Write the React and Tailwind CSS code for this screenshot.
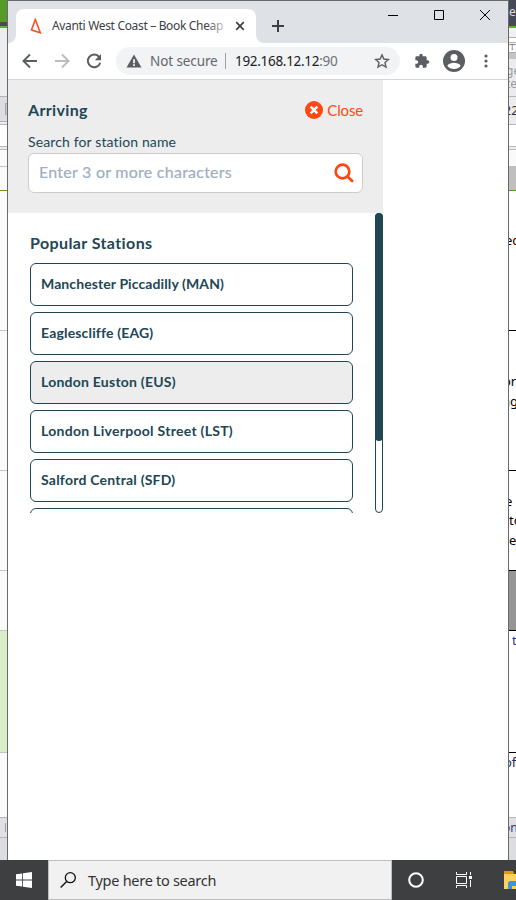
const leftStrip = [
  [22, 'bg-[#589a2a]'],
  [4, 'bg-[#474b57]'],
  [2, 'bg-[#5db22f]'],
  [68, 'bg-[#ecedef]'],
  [1, 'bg-[#b4b5ba]'],
  [24, 'bg-[#dcdde2]', 'box'],
  [1, 'bg-[#b4b5ba]'],
  [2, 'bg-[#ececee]'],
  [1, 'bg-[#b9b9b9]'],
  [21, 'bg-white'],
  [1, 'bg-[#b9b9b9]'],
  [2, 'bg-[#ececee]'],
  [1, 'bg-[#b9b9b9]'],
  [16, 'bg-[#fafafa]'],
  [1, 'bg-[#c6c6c6]'],
  [23, 'bg-[#fafafa]'],
  [1, 'bg-[#589a2a]'],
  [139, 'bg-[#fafafa]'],
  [1, 'bg-[#c4c4c4]'],
  [139, 'bg-[#fafafa]'],
  [1, 'bg-[#c4c4c4]'],
  [99, 'bg-[#fafafa]'],
  [1, 'bg-[#c4c4c4]'],
  [59, 'bg-[#fafafa]'],
  [1, 'bg-[#c4c4c4]'],
  [121, 'bg-[#d8edc8]'],
  [1, 'bg-[#c4c4c4]'],
  [64, 'bg-[#fafafa]'],
  [1, 'bg-[#b4b5ba]'],
  [19, 'bg-[#e0e1e5]', 'bar'],
  [1, 'bg-[#b4b5ba]'],
  [22, 'bg-[#dcdde2]'],
];

// [height, colour, [[text, top offset, left offset, text classes], ...]]
const rightStrip = [
  [26, 'bg-[#454a56]', [['e', 5, 0, 'text-[12px] text-[#d8dade]']]],
  [2, 'bg-[#5db22f]'],
  [9, 'bg-[#f1f1f3]'],
  [1, 'bg-[#b0b0b0]'],
  [4, 'bg-white'],
  [1, 'bg-[#b0b0b0]'],
  [1, 'bg-[#f1f1f3]'],
  [1, 'bg-[#b0b0b0]'],
  [7, 'bg-white', [['T', -1, 1, 'font-serif text-[8px] text-[#777]']]],
  [1, 'bg-[#b0b0b0]'],
  [6, 'bg-[#c4c4c6]'],
  [37, 'bg-[#ececee]', [['ge', 5, -3, 'text-[12px] text-[#9b9b9f]'], ['te', 18, -3, 'text-[12px] text-[#9b9b9f]']]],
  [1, 'bg-[#b4b5ba]'],
  [27, 'bg-[#ececee]', [['22', 7, -5, 'text-[12.5px] text-[#333]']]],
  [1, 'bg-[#b9b9b9]'],
  [21, 'bg-white'],
  [1, 'bg-[#b9b9b9]'],
  [2, 'bg-[#ececee]'],
  [1, 'bg-[#b9b9b9]'],
  [16, 'bg-[#fafafa]'],
  [24, 'bg-[#bfbfbf]'],
  [1, 'bg-[#589a2a]'],
  [139, 'bg-white', [['ec', 43, -4, 'text-[13px] text-black']]],
  [1, 'bg-black'],
  [139, 'bg-white', [['or', 44, -6, 'text-[13px] text-black'], ['ng', 64, -7, 'text-[13px] text-black']]],
  [1, 'bg-black'],
  [99, 'bg-white', [['e', 24, -4, 'text-[13px] text-black'], ['to', 43, 0, 'text-[13px] text-black'], ['e', 63, 0, 'text-[13px] text-black']]],
  [1, 'bg-black'],
  [59, 'bg-[#969696]'],
  [1, 'bg-black'],
  [121, 'bg-white', [['t', 3, 3, 'text-[13px] text-[#1f3d7a]']]],
  [1, 'bg-black'],
  [64, 'bg-white', [['of', 3, -5, 'text-[13px] text-[#1a2d50]']]],
  [1, 'bg-[#b4b5ba]'],
  [19, 'bg-[#e0e0e3]', [['on', 3, -6, 'text-[12px] text-[#2b3f7c]']]],
  [1, 'bg-[#b4b5ba]'],
  [22, 'bg-[#dcdce1]'],
];

const stations = [
  ['Manchester Piccadilly (MAN)', 'tracking-[0.1px]'],
  ['Eaglescliffe (EAG)', 'tracking-[0.16px]'],
  ['London Euston (EUS)', 'tracking-[0.24px]'],
  ['London Liverpool Street (LST)', 'tracking-[0.28px]'],
  ['Salford Central (SFD)', 'tracking-[0.22px]'],
  ['Runcorn (RUN)', 'tracking-[0.2px]'],
];

function LeftStrip() {
  return (
    <div className="w-[7px] shrink-0 overflow-hidden">
      {leftStrip.map(([h, color, mark], i) => (
        <div key={i} className={`flex items-center justify-end ${color}`} style={{ height: h }}>
          {mark === 'box' && <div className="h-3 w-[2px] border border-r-0 border-[#a9aaae] bg-[#c4c5c9]" />}
          {mark === 'bar' && <div className="mr-px h-[9px] w-px bg-[#a0a1a6]" />}
        </div>
      ))}
    </div>
  );
}

function RightStrip() {
  return (
    <div className="w-[7px] shrink-0 overflow-hidden">
      {rightStrip.map(([h, color, texts], i) => (
        <div key={i} className={`relative ${color}`} style={{ height: h }}>
          {texts &&
            texts.map(([t, top, left, cls]) => (
              <span
                key={t + top}
                className={`absolute whitespace-nowrap ${t === 'T' ? 'leading-[8px]' : 'leading-[13px]'} ${cls}`}
                style={{ top, left }}
              >
                {t}
              </span>
            ))}
        </div>
      ))}
    </div>
  );
}

function TabBar() {
  return (
    <div className="flex h-[42px] items-end bg-[#dee1e6]">
      <svg className="h-2 w-2 shrink-0" viewBox="0 0 8 8">
        <path d="M8 0v8H0a8 8 0 0 0 8-8z" fill="#fff" />
      </svg>
      <div className="flex h-[34px] w-[240px] shrink-0 items-center rounded-t-lg bg-white">
        <svg className="ml-[14px] h-4 w-3" viewBox="0 0 12 16">
          <path d="M5.3 1.5 1.5 12l8.800 2.800L5.300 1.500z" fill="none" stroke="#fb4f22" strokeWidth="1.6" />
        </svg>
        <div className="relative ml-[10px] w-[174px] overflow-hidden whitespace-nowrap text-[12px] leading-4 tracking-[-0.33px] text-[#3c4043]">
          Avanti West Coast – Book Cheap
          <div className="absolute inset-y-0 right-0 w-5 bg-linear-to-r from-transparent to-white/80" />
        </div>
        <svg className="ml-[9px] h-[10px] w-[10px]" viewBox="0 0 10 10">
          <path d="m1.200 1.200 7.600 7.600m0-7.600L1.200 8.800" stroke="#3c4043" strokeWidth="1.7" />
        </svg>
      </div>
      <svg className="h-2 w-2 shrink-0" viewBox="0 0 8 8">
        <path d="M0 0v8h8a8 8 0 0 1-8-8z" fill="#fff" />
      </svg>
      <svg className="mb-[11px] ml-2 h-3 w-3" viewBox="0 0 12 12">
        <path d="M6 0v12M0 6h12" stroke="#3c4043" strokeWidth="2" />
      </svg>
      <div className="ml-auto flex h-[42px] items-start pt-2">
        <svg className="h-3 w-[10px]" viewBox="0 0 10 12">
          <path d="M0 6.500h10" stroke="#000" />
        </svg>
        <svg className="ml-9 mt-px h-[10px] w-[10px]" viewBox="0 0 10 10">
          <path d="M.5.5h9v9h-9z" fill="none" stroke="#000" />
        </svg>
        <svg className="ml-9 mr-[18px] mt-px h-[10px] w-[10px]" viewBox="0 0 10 10">
          <path d="m0 0 10 10M10 0 0 10" stroke="#000" />
        </svg>
      </div>
    </div>
  );
}

function Toolbar() {
  return (
    <div className="flex h-[37px] items-center border-b border-[#d6d6d6] bg-white text-[13.5px]">
      <svg className="ml-[14px] h-4 w-4" viewBox="0 0 16 16">
        <path d="M15 8H2M8 1.500 1.500 8 8 14.500" fill="none" stroke="#5a5e63" strokeWidth="1.9" />
      </svg>
      <svg className="ml-4 h-4 w-4" viewBox="0 0 16 16">
        <path d="M1 8h13M8 1.500 14.500 8 8 14.500" fill="none" stroke="#babcbe" strokeWidth="1.9" />
      </svg>
      <svg className="ml-4 h-4 w-4" viewBox="0 0 16 16">
        <path d="M13.200 4.100A6.300 6.300 0 1 0 14.200 9.700" fill="none" stroke="#5a5e63" strokeWidth="2" />
        <path d="M15 1v6.200H8.800z" fill="#5a5e63" />
      </svg>
      <div className="ml-[14px] flex h-7 w-[284px] shrink-0 items-center rounded-full bg-[#f1f3f4]">
        <svg className="ml-[10px] h-[14px] w-4" viewBox="0 0 16 14">
          <path d="M8 .5 15.500 13.500H.5z" fill="#5a5e63" />
          <path d="M7.200 5.200h1.700v4H7.200zM7.200 10.300h1.700v1.600H7.200z" fill="#fff" />
        </svg>
        <span className="ml-2 w-[67px] whitespace-nowrap tracking-[-0.1px] text-[#63676b]">Not secure</span>
        <div className="ml-2 h-4 w-px bg-[#a0a3a6]" />
        <span className="ml-[9px] w-[104px] whitespace-nowrap tracking-[-0.3px] text-[#202124]">
          192.168.12.12<span className="text-[#6c7074]">:90</span>
        </span>
        <svg className="ml-[35px] h-4 w-4" viewBox="0 0 24 24">
          <path
            d="m12 2.800 2.800 6.300 6.900.7-5.200 4.600 1.500 6.800-6-3.600-6 3.600 1.500-6.800L2.300 9.800l6.900-.7z"
            fill="none"
            stroke="#5a5e63"
            strokeWidth="2.1"
          />
        </svg>
      </div>
      <svg className="ml-[14px] h-4 w-4" viewBox="0 0 24 24">
        <path
          d="M20.500 11H19V7c0-1.100-.9-2-2-2h-4V3.500a2.500 2.500 0 0 0-5 0V5H4c-1.100 0-2 .9-2 2v3.800h1.500c1.500 0 2.700 1.200 2.700 2.700S5 16.200 3.500 16.200H2V20c0 1.100.9 2 2 2h3.800v-1.500c0-1.500 1.200-2.700 2.700-2.700s2.700 1.200 2.700 2.700V22H17c1.100 0 2-.9 2-2v-4h1.500a2.500 2.500 0 0 0 0-5z"
          fill="#5a5e63"
        />
      </svg>
      <svg className="ml-[13px] h-[22px] w-[22px]" viewBox="0 0 22 22">
        <circle cx="11" cy="11" r="11" fill="#5a5e63" />
        <circle cx="11" cy="7.600" r="3.500" fill="#fff" />
        <path d="M4.300 15.800c1.200-2.200 4.500-3 6.700-3s5.500.8 6.700 3A8.500 8.500 0 0 1 11 19a8.500 8.500 0 0 1-6.700-3.200z" fill="#fff" />
      </svg>
      <svg className="ml-[19px] h-[14px] w-1" viewBox="0 0 4 14">
        <circle cx="2" cy="2" r="1.600" fill="#5a5e63" />
        <circle cx="2" cy="7" r="1.600" fill="#5a5e63" />
        <circle cx="2" cy="12" r="1.600" fill="#5a5e63" />
      </svg>
    </div>
  );
}

function StationPicker() {
  return (
    <div className="w-[375px] font-[Lato,sans-serif] text-[#214656] [font-variant-ligatures:none]">
      <div className="h-[133px] bg-[#ededed] px-5 pt-[18px]">
        <div className="flex h-6 items-center justify-between">
          <h1 className="text-[16px] font-bold leading-6 tracking-[0.35px]">Arriving</h1>
          <button className="flex items-center text-[15px] leading-6 tracking-[-0.15px] text-[#ff4713]">
            <svg className="mr-1 h-[18px] w-[18px]" viewBox="0 0 18 18">
              <circle cx="9" cy="9" r="9" fill="#ff4713" />
              <path d="m5.700 5.700 6.600 6.600m0-6.600-6.600 6.600" stroke="#fff" strokeWidth="2.500" />
            </svg>
            Close
          </button>
        </div>
        <label className="mt-[10px] block whitespace-nowrap text-[14px] leading-5 tracking-[0.13px]">
          Search for station name
        </label>
        <div className="mt-px flex h-10 items-center rounded-md border border-[#cccccc] bg-white pl-[10px] pr-2">
          <span className="mb-[2px] whitespace-nowrap text-[16px] leading-6 tracking-[0.25px] text-[#a0aec0] [-webkit-text-stroke:0.2px_#a0aec0]">
            Enter 3 or more characters
          </span>
          <svg className="ml-auto h-5 w-5" viewBox="0 0 20 20">
            <circle cx="8.500" cy="8.500" r="6.800" fill="none" stroke="#ff4713" strokeWidth="2.700" />
            <path d="m13.500 13.500 4.600 4.600" stroke="#ff4713" strokeWidth="2.800" strokeLinecap="round" />
          </svg>
        </div>
      </div>
      <div className="flex h-[300px] justify-between bg-white">
        <div className="h-[300px] w-[345px] overflow-hidden pl-[22px] pt-[18px]">
          <h2 className="mb-2 text-[16px] font-bold leading-6 tracking-[0.4px]">Popular Stations</h2>
          <ul className="flex flex-col gap-[6px]">
            {stations.map(([name, track], i) => (
              <li
                key={name}
                className={`flex h-[43px] shrink-0 items-center whitespace-nowrap rounded-md border border-[#214656] pb-[2px] pl-[10px] text-[14px] font-bold ${track} ${i === 2 ? 'bg-[#ededed]' : 'bg-white'}`}
              >
                {i < 5 && name}
              </li>
            ))}
          </ul>
        </div>
        <div className="h-[300px] w-2 rounded-full border border-[#214656]">
          <div className="-mx-px -mt-px h-[228px] rounded-full bg-[#214656]" />
        </div>
      </div>
    </div>
  );
}

function Taskbar() {
  return (
    <div className="flex h-10 w-[516px] overflow-hidden bg-[#3d3f41]">
      <div className="flex w-12 shrink-0 items-center justify-center">
        <svg className="h-4 w-4" viewBox="0 0 16 16">
          <path d="M0 2.300 6.200 1.400v6.200H0zM7 1.300 16 0v7.600H7zM0 8.400h6.200v6.200L0 13.700zM7 8.400h9V16l-9-1.300z" fill="#fff" />
        </svg>
      </div>
      <div className="flex w-[344px] shrink-0 items-center border border-[#bdbdbd] bg-[#f1f1f1]">
        <svg className="ml-[11px] h-4 w-4" viewBox="0 0 16 16">
          <circle cx="10.300" cy="5.700" r="5" fill="none" stroke="#111" strokeWidth="1.300" />
          <path d="m6.600 9.400-6 6" stroke="#111" strokeWidth="1.400" />
        </svg>
        <span className="ml-3 mt-[2px] whitespace-nowrap text-[14.5px] tracking-[-0.28px] text-[#333]">Type here to search</span>
      </div>
      <svg className="ml-4 mt-3 h-4 w-4 shrink-0" viewBox="0 0 16 16">
        <circle cx="8" cy="8" r="6.800" fill="none" stroke="#fff" strokeWidth="2" />
      </svg>
      <svg className="ml-8 mt-3 h-4 w-4 shrink-0" viewBox="0 0 16 16">
        <path d="M.5 0v2.500h10V0M.5 4.500h10v7H.5zM.5 16v-2.500h10V16M14.500 0v3M14.500 8v7" fill="none" stroke="#fff" />
        <path d="M13 4h3v3h-3z" fill="#fff" />
      </svg>
      <svg className="ml-8 mt-[11px] h-[18px] w-3 shrink-0" viewBox="0 0 12 18">
        <path d="M0 0h9l1 3H0z" fill="#e09b12" />
        <path d="M0 3h12v15H0z" fill="#ffd05a" />
        <path d="M4 18v-6.500L5.500 10H12v8z" fill="#3a96dd" />
        <path d="M8 15h4v3H8z" fill="#ffd05a" />
      </svg>
    </div>
  );
}

export default function App() {
  return (
    <div className="h-[900px] w-[516px] overflow-hidden bg-white font-['Noto_Sans',sans-serif]">
      <div className="flex h-[860px]">
        <LeftStrip />
        <main className="w-[502px] shrink-0 border-x border-t border-[#69696b] bg-white">
          <TabBar />
          <Toolbar />
          <StationPicker />
        </main>
        <RightStrip />
      </div>
      <Taskbar />
    </div>
  );
}
